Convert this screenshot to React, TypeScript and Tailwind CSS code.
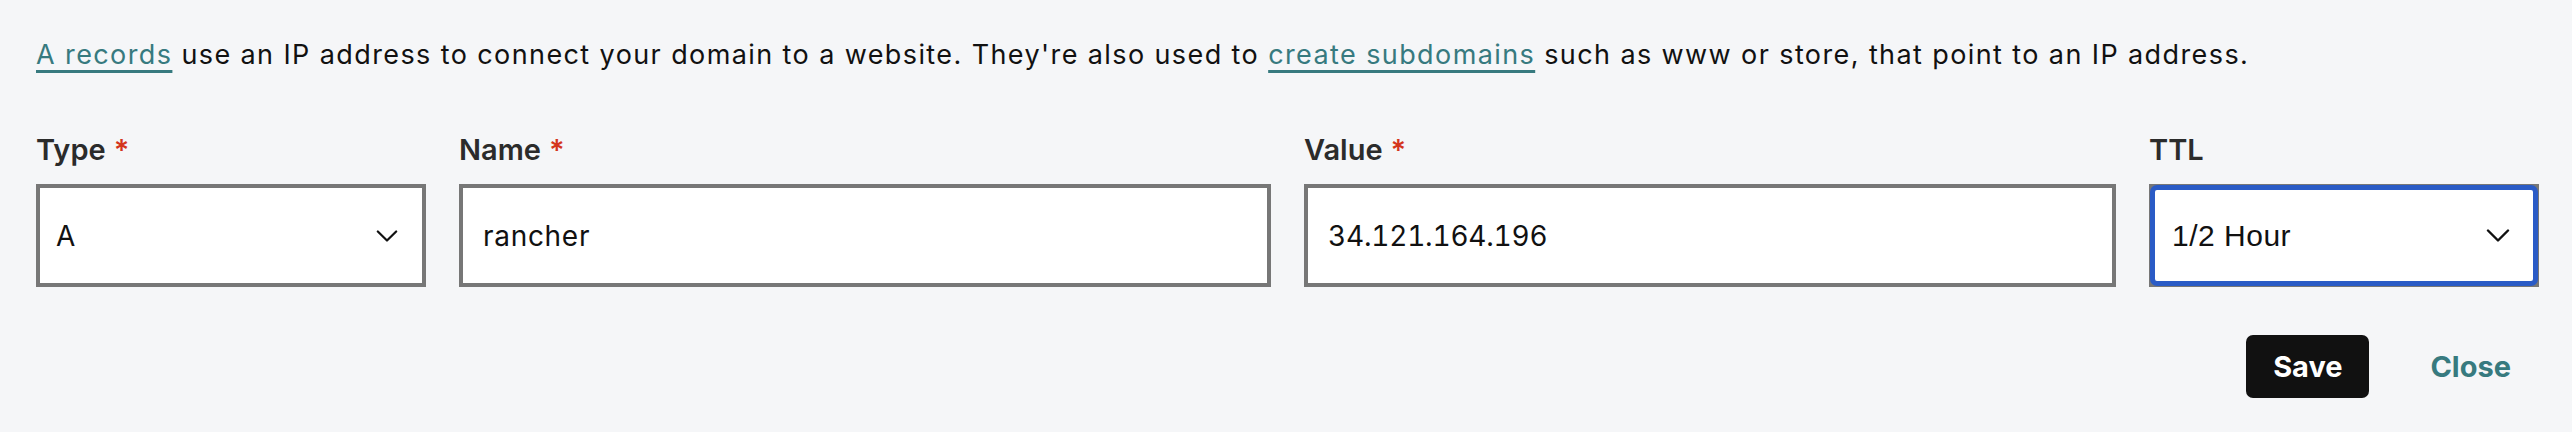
import React from 'react';

const ChevronDown: React.FC<{ className?: string }> = ({ className }) => (
  <svg viewBox="0 0 24 13" className={className} fill="none" stroke="currentColor" strokeWidth={2.4} strokeLinecap="round" strokeLinejoin="round">
    <path d="M2 1.5l10 10 10-10" />
  </svg>
);

const Label: React.FC<{ text: string; required?: boolean }> = ({ text, required }) => (
  <div className="h-[44px] flex items-end pb-[3px] text-[29px] leading-none font-semibold text-[#2b2b2b]">
    {text}
    {required && <span className="ml-[8px] text-[#d4351c] font-semibold">*</span>}
  </div>
);

export default function App() {
  return (
    <div className="w-full h-[432px] bg-[#f5f6f8] pl-[36px] pr-[33px] pt-[37px] font-['Inter',sans-serif]">
      <p className="text-[27px] leading-[36px] text-[#111111] tracking-[1.4px]">
        <a href="#" className="text-[#377a7f] underline decoration-[3px] underline-offset-[6px]">A records</a>{' '}
        use an IP address to connect your domain to a website. They're also used to{' '}
        <a href="#" className="text-[#377a7f] underline decoration-[3px] underline-offset-[6px]">create subdomains</a>{' '}
        such as www or store, that point to an IP address.
      </p>

      <div className="mt-[50px] grid grid-cols-[390px_812px_812px_390px] gap-x-[33px]">
        <div>
          <Label text="Type" required />
          <div className="mt-[17px] h-[103px] border-4 border-[#777777] bg-white flex items-center justify-between pl-[16px] pr-[24px]">
            <span className="text-[28px] tracking-[0.6px] text-[#111111]">A</span>
            <ChevronDown className="w-[22px] h-[12px] text-[#111111]" />
          </div>
        </div>
        <div>
          <Label text="Name" required />
          <div className="mt-[17px] h-[103px] border-4 border-[#777777] bg-white flex items-center pl-[20px]">
            <span className="text-[28px] tracking-[0.7px] text-[#111111]">rancher</span>
          </div>
        </div>
        <div>
          <Label text="Value" required />
          <div className="mt-[17px] h-[103px] border-4 border-[#777777] bg-white flex items-center pl-[20px]">
            <span className="text-[28px] tracking-[-0.2px] tabular-nums text-[#111111]">34.121.164.196</span>
          </div>
        </div>
        <div>
          <Label text="TTL" />
          <div className="relative mt-[17px] h-[103px] border-4 border-[#777777] bg-white">
            <div className="absolute -inset-[3px] rounded-[7px] border-[5px] border-[#2a5bc6] bg-white flex items-center justify-between pl-[17px] pr-[23px]">
              <span className="text-[30px] tracking-[0.5px] text-[#111111] font-['Liberation_Sans',Arial,sans-serif]">1/2 Hour</span>
              <ChevronDown className="w-[24px] h-[13px] text-[#111111]" />
            </div>
          </div>
        </div>
      </div>

      <div className="mt-[48px] flex justify-end gap-[33px]">
        <button className="h-[63px] w-[123px] rounded-[7px] bg-[#111111] text-white text-[29px] font-bold">Save</button>
        <button className="h-[63px] px-[28px] text-[#377a7f] text-[29px] font-bold">Close</button>
      </div>
    </div>
  );
}
